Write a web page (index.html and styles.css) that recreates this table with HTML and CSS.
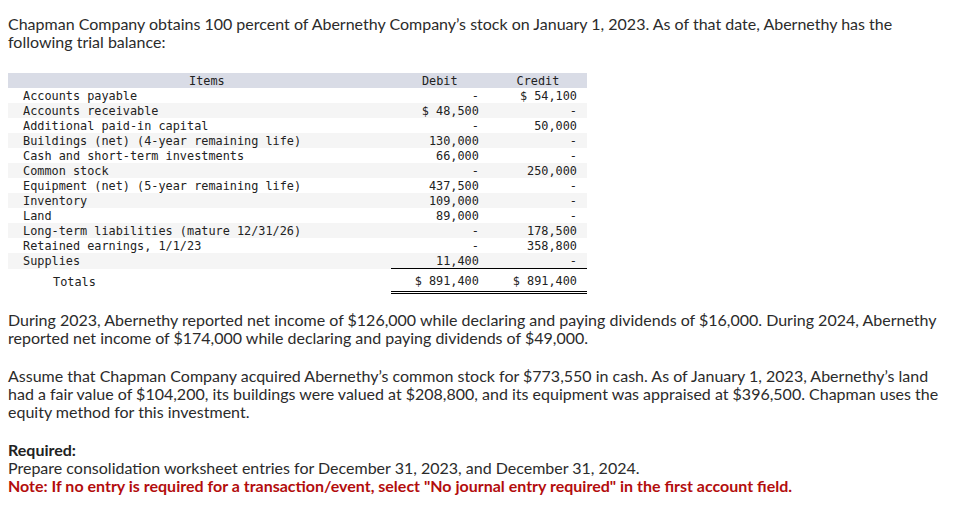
FILE: index.html
```html
<!DOCTYPE html>
<html>
<head>
<meta charset="utf-8">
<link rel="stylesheet" href="styles.css">
</head>
<body>
<div class="page">
  <p class="para first">Chapman Company obtains 100 percent of Abernethy Company’s stock on January 1, 2023. As of that date, Abernethy has the following trial balance:</p>
  <table class="tb">
    <thead>
      <tr><th class="c-item">Items</th><th class="c-num">Debit</th><th class="c-num">Credit</th></tr>
    </thead>
    <tbody>
      <tr><td class="c-item">Accounts payable</td><td class="c-val">-</td><td class="c-val">$ 54,100</td></tr>
      <tr><td class="c-item">Accounts receivable</td><td class="c-val">$ 48,500</td><td class="c-val">-</td></tr>
      <tr><td class="c-item">Additional paid-in capital</td><td class="c-val">-</td><td class="c-val">50,000</td></tr>
      <tr><td class="c-item">Buildings (net) (4-year remaining life)</td><td class="c-val">130,000</td><td class="c-val">-</td></tr>
      <tr><td class="c-item">Cash and short-term investments</td><td class="c-val">66,000</td><td class="c-val">-</td></tr>
      <tr><td class="c-item">Common stock</td><td class="c-val">-</td><td class="c-val">250,000</td></tr>
      <tr><td class="c-item">Equipment (net) (5-year remaining life)</td><td class="c-val">437,500</td><td class="c-val">-</td></tr>
      <tr><td class="c-item">Inventory</td><td class="c-val">109,000</td><td class="c-val">-</td></tr>
      <tr><td class="c-item">Land</td><td class="c-val">89,000</td><td class="c-val">-</td></tr>
      <tr><td class="c-item">Long-term liabilities (mature 12/31/26)</td><td class="c-val">-</td><td class="c-val">178,500</td></tr>
      <tr><td class="c-item">Retained earnings, 1/1/23</td><td class="c-val">-</td><td class="c-val">358,800</td></tr>
      <tr><td class="c-item">Supplies</td><td class="c-val">11,400</td><td class="c-val">-</td></tr>
      <tr class="total"><td class="c-item c-total">Totals</td><td class="c-val c-sum">$ 891,400</td><td class="c-val c-sum">$ 891,400</td></tr>
    </tbody>
  </table>
  <p class="para second">During 2023, Abernethy reported net income of $126,000 while declaring and paying dividends of $16,000. During 2024, Abernethy reported net income of $174,000 while declaring and paying dividends of $49,000.</p>
  <p class="para third">Assume that Chapman Company acquired Abernethy’s common stock for $773,550 in cash. As of January 1, 2023, Abernethy’s land had a fair value of $104,200, its buildings were valued at $208,800, and its equipment was appraised at $396,500. Chapman uses the equity method for this investment.</p>
  <div class="req">
    <div class="req-title">Required:</div>
    <div class="req-text">Prepare consolidation worksheet entries for December 31, 2023, and December 31, 2024.</div>
    <div class="req-note">Note: If no entry is required for a transaction/event, select "No journal entry required" in the first account field.</div>
  </div>
</div>
</body>
</html>
```
FILE: styles.css
```css
html, body {
  margin: 0;
  padding: 0;
  background: #ffffff;
}
.page {
  padding: 15px 8px 0 8px;
  width: 942px;
  font-family: Lato, "Noto Sans", sans-serif;
  font-size: 16px;
  line-height: 18px;
  color: #2b2b2b;
}
.para {
  margin: 0;
}
.tb {
  margin-top: 22px;
  border-collapse: collapse;
  font-family: "DejaVu Sans Mono", "Liberation Mono", monospace;
  font-size: 11.85px;
  line-height: 14px;
  color: #222222;
  width: 579px;
}
.tb th {
  background: #d9dce6;
  font-weight: normal;
  height: 14px;
  padding: 1px 0 0 0;
}
.tb td {
  height: 14px;
  padding: 1px 0 0 0;
  white-space: pre;
}
.tb tbody tr:nth-child(even) td {
  background: #f5f5f5;
}
.tb th.c-item {
  width: 367px;
  padding-left: 15px;
  text-align: center;
}
.tb th.c-num {
  width: 98px;
  text-align: center;
}
.tb td.c-item {
  padding-left: 15px;
  text-align: left;
}
.tb td.c-val {
  text-align: right;
  padding-right: 10px;
}
.tb tr.total td {
  height: 20px;
  padding-top: 2px;
  background: #ffffff;
}
.tb td.c-total {
  padding-left: 45px;
}
.tb td.c-sum {
  border-top: 1px solid #000000;
  border-bottom: 3px double #000000;
}
.second {
  margin-top: 17px;
}
.third {
  margin-top: 20px;
}
.req {
  margin-top: 20px;
}
.req-title {
  font-weight: bold;
  color: #222222;
}
.req-note {
  font-weight: bold;
  color: #b30d0d;
}
```
